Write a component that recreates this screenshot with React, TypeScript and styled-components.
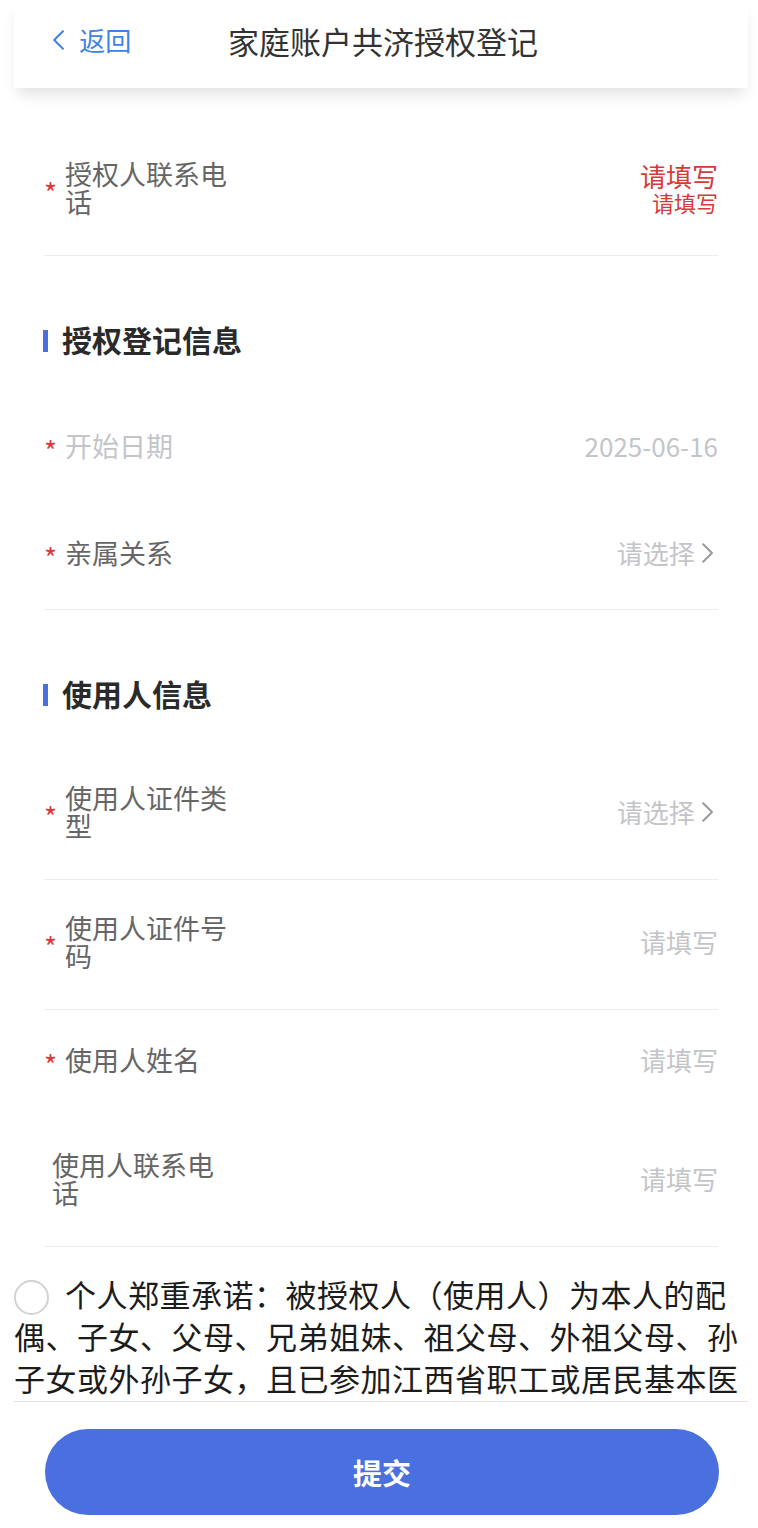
import React from "react";
import styled, { createGlobalStyle } from "styled-components";

const colors = {
  blue: "#4a70e0",
  link: "#3f82e4",
  red: "#d8393b",
  label: "#666666",
  muted: "#c4c5c9",
  line: "#ececef",
  text: "#1c1c1c",
};

const GlobalStyle = createGlobalStyle`
  html, body {
    margin: 0;
    padding: 0;
    background: #ffffff;
    font-family: "Noto Sans CJK SC", "Noto Sans", sans-serif;
  }
  * { box-sizing: border-box; }
`;

const Page = styled.div`
  height: 1528px;
  padding: 0 10px 0 14px;
  display: flex;
  flex-direction: column;
  overflow: hidden;
`;

const Header = styled.header`
  position: relative;
  z-index: 2;
  height: 88px;
  flex-shrink: 0;
  display: flex;
  align-items: center;
  justify-content: center;
  background: #fff;
  box-shadow: 0 10px 14px -4px rgba(0, 0, 0, 0.12);
  .back {
    position: absolute;
    left: 38px;
    top: 22px;
    display: flex;
    align-items: center;
    gap: 14px;
    color: ${colors.link};
    font-size: 26px;
    line-height: 36px;
  }
  .title {
    font-size: 31px;
    color: #333;
    margin-left: 4px;
    margin-top: -7px;
  }
`;

const Scroll = styled.main`
  flex: 1;
  overflow: hidden;
  padding-top: 38px;
`;

const Form = styled.div`
  padding: 0 30px;
`;

const Row = styled.div<{ $divider?: boolean }>`
  display: flex;
  align-items: center;
  justify-content: space-between;
  padding: 34px 0 40px;
  border-bottom: 1px solid ${(p) => (p.$divider ? colors.line : "transparent")};
`;

const LabelWrap = styled.div`
  display: flex;
  align-items: center;
`;

const Star = styled.span`
  width: 21px;
  color: ${colors.red};
  font-size: 28px;
  line-height: 22px;
  padding-top: 8px;
  flex-shrink: 0;
`;

const Label = styled.div<{ $dim?: boolean; $indent?: boolean }>`
  width: 170px;
  margin-left: ${(p) => (p.$indent ? "8px" : "0")};
  font-size: 27px;
  line-height: 27.5px;
  color: ${(p) => (p.$dim ? colors.muted : colors.label)};
`;

const Value = styled.div<{ $tone?: "muted" | "error" }>`
  display: flex;
  flex-direction: column;
  align-items: flex-end;
  font-size: 26px;
  line-height: 32px;
  color: ${(p) => (p.$tone === "error" ? colors.red : colors.muted)};
  .main {
    line-height: 28px;
  }
  .hint {
    font-size: 22px;
    line-height: 24px;
  }
`;

const Picker = styled.div`
  display: flex;
  align-items: center;
  gap: 6px;
  font-size: 26px;
  line-height: 32px;
  color: ${colors.muted};
  margin-right: 4px;
`;

const SectionTitle = styled.h2`
  display: flex;
  align-items: center;
  gap: 14px;
  margin: 0;
  padding: 63px 0 37px;
  font-size: 30px;
  line-height: 40px;
  font-weight: 700;
  color: #2a2a2a;
  &::before {
    content: "";
    width: 5px;
    height: 22px;
    background: ${colors.blue};
    margin-left: -1px;
    margin-top: 3px;
  }
`;

const Agreement = styled.p`
  margin: 0;
  padding-top: 26px;
  font-size: 31px;
  line-height: 42px;
  letter-spacing: 0.5px;
  color: ${colors.text};
`;

const Radio = styled.span`
  display: inline-block;
  width: 35px;
  height: 35px;
  border-radius: 50%;
  border: 2px solid #d2d2d4;
  vertical-align: -8px;
  margin-right: 16px;
`;

const Footer = styled.footer`
  flex-shrink: 0;
  border-top: 1px solid #dfe3ea;
  padding: 27px 29px 13px 31px;
  background: #fff;
`;

const Submit = styled.button`
  width: 100%;
  height: 86px;
  border: none;
  border-radius: 43px;
  background: ${colors.blue};
  color: #fff;
  font-family: inherit;
  font-size: 29px;
  font-weight: 700;
`;

const Chevron: React.FC<{ dir: "left" | "right"; color: string; size: number }> = ({ dir, color, size }) => (
  <svg width={size * 0.6} height={size} viewBox="0 0 12 20" fill="none">
    <polyline
      points={dir === "left" ? "10,2 2,10 10,18" : "2,2 10,10 2,18"}
      stroke={color}
      strokeWidth="1.8"
      strokeLinecap="round"
      strokeLinejoin="round"
    />
  </svg>
);

type Field = {
  label: string;
  required?: boolean;
  dim?: boolean;
  value?: string;
  picker?: boolean;
  divider?: boolean;
};

const FieldRow: React.FC<Field> = ({ label, required, dim, value, picker, divider }) => (
  <Row $divider={divider}>
    <LabelWrap>
      {required && <Star>*</Star>}
      <Label $dim={dim} $indent={!required}>{label}</Label>
    </LabelWrap>
    {picker ? (
      <Picker>
        请选择
        <Chevron dir="right" color="#9a9a9e" size={22} />
      </Picker>
    ) : (
      <Value>{value ?? "请填写"}</Value>
    )}
  </Row>
);

const App: React.FC = () => {
  return (
    <>
      <GlobalStyle />
      <Page>
        <Header>
          <div className="back">
            <Chevron dir="left" color={colors.link} size={22} />
            返回
          </div>
          <div className="title">家庭账户共济授权登记</div>
        </Header>
        <Scroll>
          <Form>
            <Row $divider>
              <LabelWrap>
                <Star>*</Star>
                <Label>授权人联系电话</Label>
              </LabelWrap>
              <Value $tone="error">
                <span className="main">请填写</span>
                <span className="hint">请填写</span>
              </Value>
            </Row>

            <SectionTitle>授权登记信息</SectionTitle>
            <FieldRow label="开始日期" required dim value="2025-06-16" />
            <FieldRow label="亲属关系" required picker divider />

            <SectionTitle>使用人信息</SectionTitle>
            <FieldRow label="使用人证件类型" required picker divider />
            <FieldRow label="使用人证件号码" required divider />
            <FieldRow label="使用人姓名" required />
            <FieldRow label="使用人联系电话" divider />
          </Form>
          <Agreement>
            <Radio />
            个人郑重承诺：被授权人（使用人）为本人的配偶、子女、父母、兄弟姐妹、祖父母、外祖父母、孙子女或外孙子女，且已参加江西省职工或居民基本医疗保险，本人自愿将个人账户资金授权给被授权人使用。
          </Agreement>
        </Scroll>
        <Footer>
          <Submit>提交</Submit>
        </Footer>
      </Page>
    </>
  );
};

export default App;
